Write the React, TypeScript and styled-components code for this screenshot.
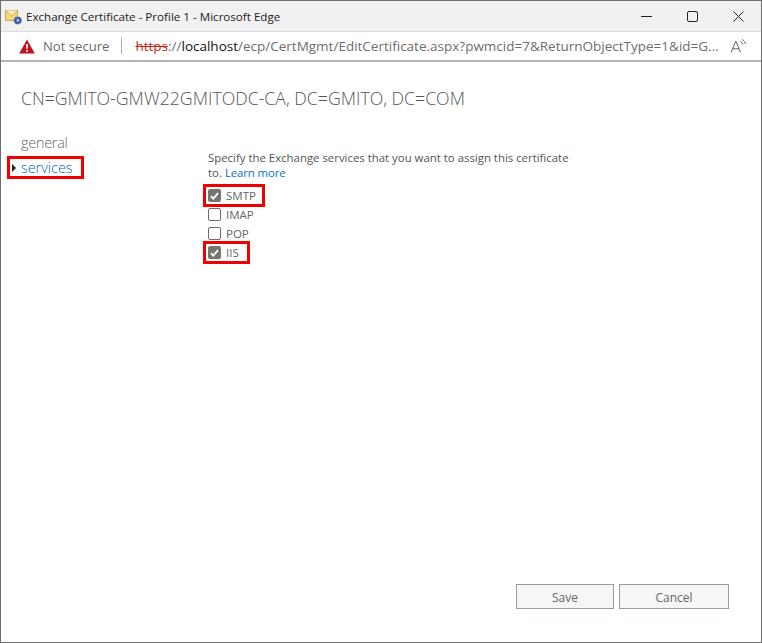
import React from "react";
import styled, { createGlobalStyle } from "styled-components";

const Global = createGlobalStyle`
  html, body { margin: 0; padding: 0; background: #fff; }
  body { font-family: "Open Sans", "Noto Sans", sans-serif; }
`;

const Win = styled.div`
  width: 762px; height: 643px; box-sizing: border-box;
  border: 1px solid #6f6f6f;
  display: flex; flex-direction: column; background: #fff; overflow: hidden;
`;
const TitleBar = styled.div`
  height: 30px; flex: none; background: #f1f1f1; display: flex; align-items: center; padding-left: 4px;
`;
const TitleText = styled.span`
  font-size: 11.6px; color: #222; margin-left: 3px; flex: 1; white-space: nowrap;
`;
const WinBtn = styled.div`
  width: 46px; height: 30px; display: flex; align-items: center; justify-content: center; flex: none;
`;
const AddressBar = styled.div`
  height: 28px; flex: none; background: #fff; border-bottom: 2px solid #b4b4b4; border-top: 1px solid #dcdcdc;
  box-sizing: content-box; display: flex; align-items: center; padding-left: 18px; white-space: nowrap;
`;
const NotSecure = styled.span`
  font-size: 13.1px; color: #6a6a6a; margin-left: 8px;
`;
const Sep = styled.span`
  width: 1px; height: 16px; background: #a9a9a9; margin: 0 13px 0 12px; flex: none;
`;
const Url = styled.span`
  font-size: 13.5px; color: #6e6e6e; width: 592px; flex: none; overflow: hidden;
`;
const Https = styled.span`
  color: #c42b1c; text-decoration: line-through;
`;
const Host = styled.span`
  color: #111;
`;
const Content = styled.div`
  flex: 1; display: flex; flex-direction: column; min-height: 0;
`;
const Heading = styled.h1`
  margin: 24px 0 0 20px; font-size: 17.7px; font-weight: 300; color: #555; line-height: 24px; white-space: nowrap;
`;
const Body = styled.div`
  flex: 1; display: flex; min-height: 0;
`;
const Nav = styled.div`
  width: 207px; flex: none; padding: 23px 0 0 6px; box-sizing: border-box; display: flex; flex-direction: column;
`;
const NavItem = styled.div<{ $active?: boolean }>`
  font-size: 14.4px; line-height: 19px; height: 19px; padding-left: ${p => (p.$active ? 0 : 14)}px; font-weight: 300;
  letter-spacing: ${p => (p.$active ? 0 : -0.25)}px;
  color: ${p => (p.$active ? "#0067b8" : "#666")}; display: flex; align-items: center;
`;
const Marker = styled.span`
  width: 0; height: 0; border-left: 4px solid #222; border-top: 4px solid transparent; border-bottom: 4px solid transparent;
  margin: 0 5px 0 2px;
`;
const Highlight = styled.div`
  border: 3px solid #f00000; align-self: flex-start; box-sizing: border-box;
`;
const NavHighlight = styled(Highlight)`
  width: 77px; height: 23px; margin-top: 4px;
  display: flex; align-items: center;
`;
const Main = styled.div`
  padding-top: 40px; width: 375px; display: flex; flex-direction: column;
`;
const Desc = styled.div`
  font-size: 11.4px; line-height: 15px; color: #555; margin-bottom: 6px;
`;
const Link = styled.a`
  color: #0072c6; text-decoration: none; letter-spacing: -0.1px;
`;
const Opts = styled.div`
  display: flex; flex-direction: column; margin-left: -5px;
`;
const OptRow = styled.div`
  display: flex; align-items: center; height: 19px; font-size: 11.5px; color: #666; padding-left: 5px;
`;
const BoxedRow = styled(Highlight)<{ $w: number }>`
  display: flex; align-items: center; height: 23px; width: ${p => p.$w}px; font-size: 11.5px; color: #666; padding-left: 2px; margin: -2px 0;
`;
const Check = styled.span<{ $on?: boolean }>`
  width: 13px; height: 13px; flex: none; box-sizing: border-box; border-radius: 2px; margin-right: 5px;
  border: 1px solid ${p => (p.$on ? "#757575" : "#6c6c6c")}; background: ${p => (p.$on ? "#757575" : "#fff")};
  display: flex; align-items: center; justify-content: center;
`;
const Footer = styled.div`
  flex: none; display: flex; justify-content: flex-end; gap: 5px; padding: 0 32px 33px 0;
`;
const Btn = styled.button<{ $w: number }>`
  width: ${p => p.$w}px; height: 25px; box-sizing: border-box; border: 1px solid #93a1a3; background: #f6f6f6;
  font: 12px "Open Sans", "Noto Sans", sans-serif; color: #666; padding: 2px 0 0;
`;

const Tick = () => (
  <svg width="9" height="8" viewBox="0 0 9 8"><path d="M1 4.2 3.3 6.6 8 1.2" fill="none" stroke="#fff" strokeWidth="1.9" /></svg>
);

const Option = ({ label }: { label: string }) => (
  <OptRow><Check />{label}</OptRow>
);
const BoxedOption = ({ label, w }: { label: string; w: number }) => (
  <BoxedRow $w={w}><Check $on><Tick /></Check>{label}</BoxedRow>
);

export default function App() {
  return (
    <Win>
      <Global />
      <TitleBar>
        <svg width="18" height="18" viewBox="0 0 18 18">
          <rect x="0.5" y="3.5" width="12" height="10" fill="#f4d97a" stroke="#b89a4c" strokeWidth="0.8" />
          <path d="M0.5 3.5 6.5 9 12.5 3.5" fill="#fdf2bd" stroke="#b89a4c" strokeWidth="0.8" />
          <circle cx="12.8" cy="13.4" r="3.4" fill="#3f66b8" stroke="#2a4a90" strokeWidth="1.2" strokeDasharray="1.3 0.8" />
          <circle cx="12.8" cy="13.4" r="1.1" fill="#dbe5f8" />
        </svg>
        <TitleText>Exchange Certificate - Profile 1 - Microsoft Edge</TitleText>
        <WinBtn><svg width="11" height="11" viewBox="0 0 11 11"><path d="M0 5.5h11" stroke="#222" /></svg></WinBtn>
        <WinBtn><svg width="11" height="11" viewBox="0 0 11 11"><rect x="0.5" y="0.5" width="10" height="10" rx="1.5" fill="none" stroke="#222" /></svg></WinBtn>
        <WinBtn><svg width="11" height="11" viewBox="0 0 11 11"><path d="M0.5 0.5l10 10M10.5 0.5l-10 10" stroke="#222" /></svg></WinBtn>
      </TitleBar>
      <AddressBar>
        <svg width="16" height="15" viewBox="0 0 16 15">
          <path d="M8 0.5 15.8 14.5H0.2Z" fill="#c50f1f" />
          <path d="M7.1 5h1.8l-.2 5H7.3zM7.1 11h1.8v1.8H7.1z" fill="#fff" />
        </svg>
        <NotSecure>Not secure</NotSecure>
        <Sep />
        <Url><Https>https</Https>://<Host>localhost</Host>/ecp/CertMgmt/EditCertificate.aspx?pwmcid=7&amp;ReturnObjectType=1&amp;id=G...</Url>
        <svg width="18" height="16" viewBox="0 0 18 16" style={{ marginLeft: 3 }}>
          <path d="M1 14.5 5.8 3 10.6 14.5M2.6 10.8h6.4" fill="none" stroke="#666" strokeWidth="1" />
          <path d="M10.5 3.5c1.2.6 2 1.6 2.3 3M12 1.5c2 .9 3 2.4 3.4 4.5" fill="none" stroke="#666" strokeWidth="1" />
        </svg>
      </AddressBar>
      <Content>
        <Heading>CN=GMITO-GMW22GMITODC-CA, DC=GMITO, DC=COM</Heading>
        <Body>
          <Nav>
            <NavItem>general</NavItem>
            <NavHighlight><NavItem $active><Marker />services</NavItem></NavHighlight>
          </Nav>
          <Main>
            <Desc>Specify the Exchange services that you want to assign this certificate to. <Link>Learn more</Link></Desc>
            <Opts>
              <BoxedOption label="SMTP" w={62} />
              <Option label="IMAP" />
              <Option label="POP" />
              <BoxedOption label="IIS" w={47} />
            </Opts>
          </Main>
        </Body>
        <Footer>
          <Btn $w={98}>Save</Btn>
          <Btn $w={110}>Cancel</Btn>
        </Footer>
      </Content>
    </Win>
  );
}
